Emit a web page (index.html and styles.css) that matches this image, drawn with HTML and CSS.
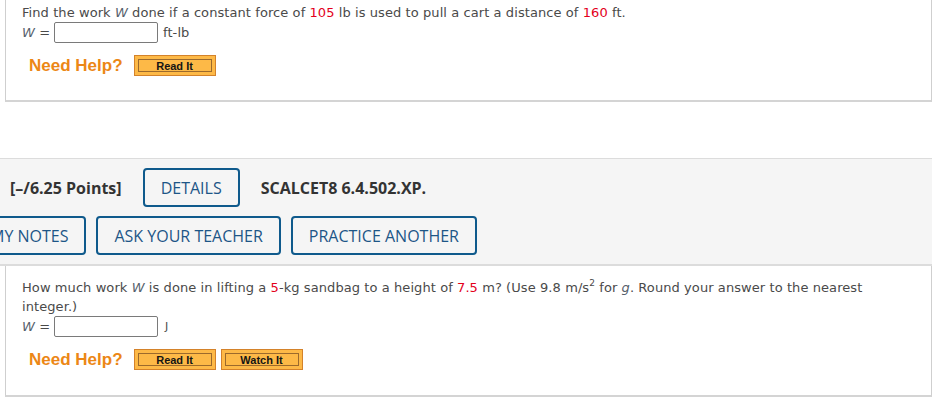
FILE: index.html
```html
<!DOCTYPE html>
<html>
<head>
<meta charset="utf-8">
<link rel="stylesheet" href="styles.css">
</head>
<body>
<div class="qbox qbox-first">
  <div class="qtext">Find the work <i>W</i> done if a constant force of <span class="red">105</span> lb is used to pull a cart a distance of <span class="red">160</span> ft.</div>
  <div class="answer-row">
    <span class="lbl"><i>W</i> =</span>
    <span class="input"></span>
    <span class="unit">ft-lb</span>
  </div>
  <div class="help-row">
    <span class="need">Need Help?</span>
    <span class="hbtn">Read It</span>
  </div>
</div>

<div class="header">
  <div class="hrow">
    <span class="points">[–/6.25 Points]</span>
    <span class="obtn">DETAILS</span>
    <span class="code">SCALCET8 6.4.502.XP.</span>
  </div>
  <div class="hrow hrow-actions">
    <span class="obtn">MY NOTES</span>
    <span class="obtn">ASK YOUR TEACHER</span>
    <span class="obtn">PRACTICE ANOTHER</span>
  </div>
</div>

<div class="qbox qbox-second">
  <div class="qtext">How much work <i>W</i> is done in lifting a <span class="red">5</span>-kg sandbag to a height of <span class="red">7.5</span> m? (Use 9.8 m/s<sup>2</sup> for <i>g</i>. Round your answer to the nearest integer.)</div>
  <div class="answer-row">
    <span class="lbl"><i>W</i> =</span>
    <span class="input"></span>
    <span class="unit unit-j">J</span>
  </div>
  <div class="help-row">
    <span class="need">Need Help?</span>
    <span class="hbtn">Read It</span>
    <span class="hbtn">Watch It</span>
  </div>
</div>
</body>
</html>
```
FILE: styles.css
```css
html, body {
  margin: 0;
  padding: 0;
  background: #ffffff;
  overflow: hidden;
}
body {
  width: 932px;
  height: 412px;
}
.qbox {
  margin-left: 5px;
  border-left: 1px solid #cfcfcf;
  border-right: 1px solid #cfcfcf;
  border-bottom: 2px solid #d4d4d4;
  padding-left: 16px;
  background: #fff;
  font-family: "DejaVu Sans", Verdana, sans-serif;
  font-size: 13px;
  letter-spacing: 0.08px;
  color: #4a4a4a;
}
.qbox-first {
  height: 102px;
  box-sizing: border-box;
  padding-top: 3px;
}
.qbox-second {
  height: 131px;
  box-sizing: border-box;
  padding-top: 12px;
}
.qtext {
  line-height: 19px;
  padding-right: 50px;
}
.qtext i, .lbl i {
  color: #55606b;
}
.qtext sup {
  font-size: 9px;
  line-height: 0;
  vertical-align: 6px;
}
.red {
  color: #e3001b;
}
.answer-row {
  display: flex;
  align-items: center;
  height: 21px;
}
.lbl {
  width: 32px;
}
.input {
  display: block;
  width: 102px;
  height: 19px;
  border: 1px solid #7a7a7a;
  border-radius: 2px;
  background: #fff;
}
.unit {
  margin-left: 5px;
}
.unit-j {
  margin-left: 7px;
  font-size: 11px;
}
.help-row {
  display: flex;
  align-items: center;
  margin-top: 12px;
  padding-left: 7px;
  gap: 5px;
}
.need {
  font-family: "Liberation Sans", Arial, sans-serif;
  font-weight: bold;
  font-size: 17px;
  letter-spacing: 0;
  color: #ec8716;
  margin-right: 6px;
}
.hbtn {
  display: flex;
  align-items: center;
  justify-content: center;
  box-sizing: border-box;
  width: 82px;
  height: 21px;
  background: #fdb947;
  border: 1px solid #d4822a;
  box-shadow: inset 0 0 0 3px #fdb947, inset 0 0 0 4px #9c6a2c;
  font-family: "Liberation Sans", Arial, sans-serif;
  font-weight: bold;
  font-size: 11px;
  letter-spacing: 0;
  color: #151515;
}
.header {
  margin-top: 56px;
  background: #f5f5f5;
  border-top: 1px solid #dcdcdc;
  border-bottom: 2px solid #dcdcdc;
  padding: 9px 0 9px 10px;
  font-family: "Open Sans", "Noto Sans", sans-serif;
  font-size: 16px;
  color: #333;
}
.hrow {
  display: flex;
  align-items: center;
  gap: 21px;
}
.hrow-actions {
  margin-top: 9px;
  gap: 10px;
  margin-left: -38px;
}
.points, .code {
  font-weight: bold;
}
.obtn {
  display: flex;
  align-items: center;
  box-sizing: border-box;
  height: 39px;
  padding: 0 16px;
  border: 2px solid #0f5a8c;
  border-radius: 4px;
  color: #1d5687;
  white-space: nowrap;
}
```
